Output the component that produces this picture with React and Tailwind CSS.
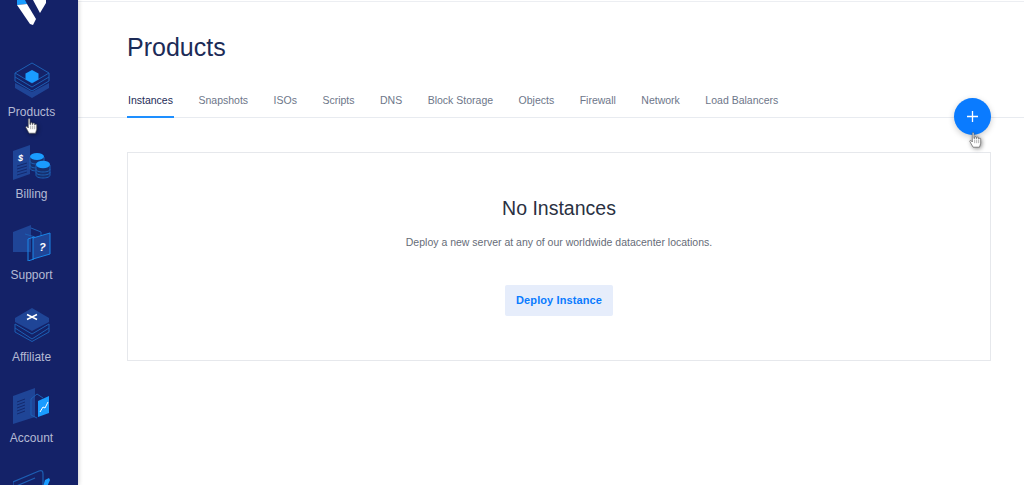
const tabs = ['Instances', 'Snapshots', 'ISOs', 'Scripts', 'DNS', 'Block Storage', 'Objects', 'Firewall', 'Network', 'Load Balancers'];

const DARK = '#1f4597';
const LINE = '#1d5fb4';
const BRIGHT = '#1a9cff';

function ProductsIcon() {
    return (
        <svg width="36" height="36" viewBox="0 0 36 36" fill="none">
            <path d="M1 21 18 30 35 21V26L18 36 1 26Z" fill={DARK} />
            <path d="M18 1 35 11 18 21 1 11Z" stroke={LINE} strokeWidth="1" />
            <path d="M1 11V15L18 25 35 15V11M1 15V19L18 29 35 19V15" stroke={LINE} strokeWidth="1" />
            <path d="M18 8 24.500 11.500V17.500L18 21 11.500 17.500V11.500Z" fill={BRIGHT} />
        </svg>
    );
}

function BillingIcon() {
    return (
        <svg width="38" height="36" viewBox="0 0 38 36" fill="none">
            <path d="M0 7 17 1V30L0 36Z" fill={DARK} />
            <text x="5" y="17" fill="#fff" fontSize="9" fontWeight="700" fontStyle="italic" fontFamily="Liberation Sans, sans-serif">$</text>
            <path d="M4 22 14 19M4 25 14 22M4 28 14 25M4 31 14 28" stroke="#13296e" strokeWidth="1" />
            <path d="M17 13V24C17 26 20 27 24 27S31 26 31 24V13" fill="#16306f" stroke={LINE} strokeWidth="1" />
            <path d="M17 17C17 19 20 20 24 20M17 21C17 23 20 24 24 24" stroke={LINE} strokeWidth="1" />
            <ellipse cx="24" cy="12.500" rx="7" ry="3.500" fill={BRIGHT} />
            <path d="M23 21V31C23 33 26 34 30 34S37 33 37 31V21" fill="#16306f" stroke={LINE} strokeWidth="1" />
            <path d="M23 25C23 27 26 28 30 28S37 27 37 25M23 28C23 30 26 31 30 31S37 30 37 28" stroke={LINE} strokeWidth="1" />
            <ellipse cx="30" cy="20.500" rx="7" ry="3.800" fill={BRIGHT} />
        </svg>
    );
}

function SupportIcon() {
    return (
        <svg width="38" height="36" viewBox="0 0 38 36" fill="none">
            <path d="M0 7 18 0V27L0 27Z" fill={DARK} />
            <path d="M18 3 28 7V27M12 9 22 12V30" stroke={LINE} strokeWidth="1" />
            <path d="M15 14 21 12V34L15 36Z" stroke="#1a86e8" strokeWidth="1" />
            <path d="M20 13 37 8V29L20 34Z" fill={DARK} stroke="#1a86e8" strokeWidth="1" />
            <text x="26" y="26" fill="#fff" fontSize="11" fontWeight="700" fontStyle="italic" fontFamily="Liberation Sans, sans-serif">?</text>
        </svg>
    );
}

function AffiliateIcon() {
    return (
        <svg width="36" height="34" viewBox="0 0 36 34" fill="none">
            <path d="M1 16V20L18 31 35 20V16M1 20V24L18 33.500 35 24V20" stroke={LINE} strokeWidth="1" />
            <path d="M1 16 18 26 35 16" stroke={LINE} strokeWidth="1" />
            <path d="M18 0 35 10V14L18 23 1 14V10Z" fill={DARK} />
            <path d="M13 6.500 23 11.500M23 6.500 13 11.500" stroke="#fff" strokeWidth="1.500" />
        </svg>
    );
}

function AccountIcon() {
    return (
        <svg width="38" height="37" viewBox="0 0 38 37" fill="none">
            <path d="M0 8 22 0V29L0 36Z" fill={DARK} />
            <path d="M4 14 12 11M4 17 12 14M4 20 12 17M4 23 12 20M4 26 12 23" stroke="#13296e" strokeWidth="1" />
            <path d="M18 11 24 6 30 10M18 11V27L24 30" stroke={LINE} strokeWidth="1" />
            <path d="M25 13 36 8V25L25 29Z" fill={BRIGHT} />
            <path d="M27 24 30 19 32 20 35 14" stroke="#fff" strokeWidth="1" />
        </svg>
    );
}

function WalletIcon() {
    return (
        <svg width="38" height="17" viewBox="0 0 38 17" fill="none">
            <path d="M0 12 26 1C29 0 30 1 30 4V17" stroke={LINE} strokeWidth="1.200" />
            <path d="M1 17 22 8" stroke={LINE} strokeWidth="1.200" />
            <path d="M0 17V12" stroke={LINE} strokeWidth="1.200" />
            <path d="M32 10 36 8 37 10 34 17H30Z" fill={BRIGHT} />
        </svg>
    );
}

function Logo() {
    return (
        <svg width="30" height="26" viewBox="0 0 30 26">
            <path d="M1 0H9L11 4 1 5Z" fill={BRIGHT} />
            <path d="M1 5 11 4 20 19 17 25 14 24Z" fill="#fff" />
            <path d="M17 0H30V3L24 13Z" fill="#fff" />
        </svg>
    );
}

function Hand() {
    return (
        <svg width="13" height="16" viewBox="0 0 16 20" className="drop-shadow-[1px_1px_2px_rgba(0,0,0,0.45)]">
            <path d="M4 1.500C4 .5 6 .5 6 1.500V8H7V6.500C7 5.500 9 5.500 9 6.500V8H9.800V7C9.800 6 11.800 6 11.800 7V8.500H12.500C12.500 7.500 14.500 7.500 14.500 8.500V14L13 19H5L1 12C.5 10.800 1.800 10 2.800 11L4 12.500Z" fill="#fff" stroke="#555" strokeWidth="0.800" />
            <path d="M7 9.500V14M9.500 9.500V14M12 9.500V14" stroke="#777" strokeWidth="0.700" />
        </svg>
    );
}

function NavItem({ icon, label }) {
    return (
        <div className="w-[63px] flex flex-col items-center shrink-0 mb-[23.5px]">
            <div className="h-9 flex items-center justify-center">{icon}</div>
            <span className="mt-[6px] text-[12px] leading-4 text-[#b4bad4]">{label}</span>
        </div>
    );
}

export default function App() {
    return (
        <div className="relative flex h-[485px] overflow-hidden bg-white font-['Liberation_Sans',sans-serif]">

            {/* sidebar */}
            <aside className="w-[78px] shrink-0 h-full overflow-hidden bg-[#142268] flex flex-col shadow-[1px_0_4px_rgba(0,0,0,0.18)] z-10">
                <div className="h-[62px] shrink-0 pl-[16px]">
                    <Logo />
                </div>
                <NavItem icon={<ProductsIcon />} label="Products" />
                <NavItem icon={<BillingIcon />} label="Billing" />
                <NavItem icon={<SupportIcon />} label="Support" />
                <NavItem icon={<AffiliateIcon />} label="Affiliate" />
                <NavItem icon={<AccountIcon />} label="Account" />
                <div className="w-[63px] flex justify-center shrink-0">
                    <WalletIcon />
                </div>
            </aside>

            {/* main */}
            <main className="flex-1 min-w-0 mt-[1px] border-t border-[#eceef2]">
                <div className="pl-[49px] pt-[30px]">
                    <h1 className="text-[25px] leading-[30px] text-[#1c2b57]">Products</h1>
                </div>

                <div className="mt-[22px] pl-[49px] h-[34px] flex gap-[23.500px] border-b border-[#e8ebf0]">
                    {tabs.map((tab, i) => (
                        <div
                            key={tab}
                            className={`px-[1px] h-[34px] pt-[9px] text-[10.500px] leading-[14px] border-b-2 ${i === 0 ? 'text-[#1c2b57] border-[#1e8fff]' : 'text-[#6d7689] border-transparent'}`}
                        >
                            {tab}
                        </div>
                    ))}
                </div>

                <div className="ml-[49px] mr-[33px] mt-[34px] h-[209px] border border-[#e6e8ec] flex flex-col items-center">
                    <h2 className="mt-[43px] text-[19.500px] leading-6 text-[#2a3142]">No Instances</h2>
                    <p className="mt-[15px] text-[10.500px] leading-[14px] text-[#666c78]">Deploy a new server at any of our worldwide datacenter locations.</p>
                    <button className="mt-[36px] w-[108px] h-[31px] rounded-[2px] bg-[#e6edfb] text-[#0a7bff] text-[11px] font-bold tracking-[0.1px]">
                        Deploy Instance
                    </button>
                </div>
            </main>

            {/* floating add button and cursors */}
            <div className="absolute left-[954px] top-[98px] w-[37px] h-[37px] rounded-full bg-[#0a7bff] flex items-center justify-center shadow-[0_2px_6px_rgba(0,0,0,0.2)] z-20">
                <svg width="11" height="11" viewBox="0 0 11 11">
                    <path d="M5.500 0V11M0 5.500H11" stroke="#fff" strokeWidth="1.300" />
                </svg>
            </div>
            <div className="absolute left-[969px] top-[132px] z-30"><Hand /></div>
            <div className="absolute left-[25px] top-[118px] z-30"><Hand /></div>
        </div>
    );
}
